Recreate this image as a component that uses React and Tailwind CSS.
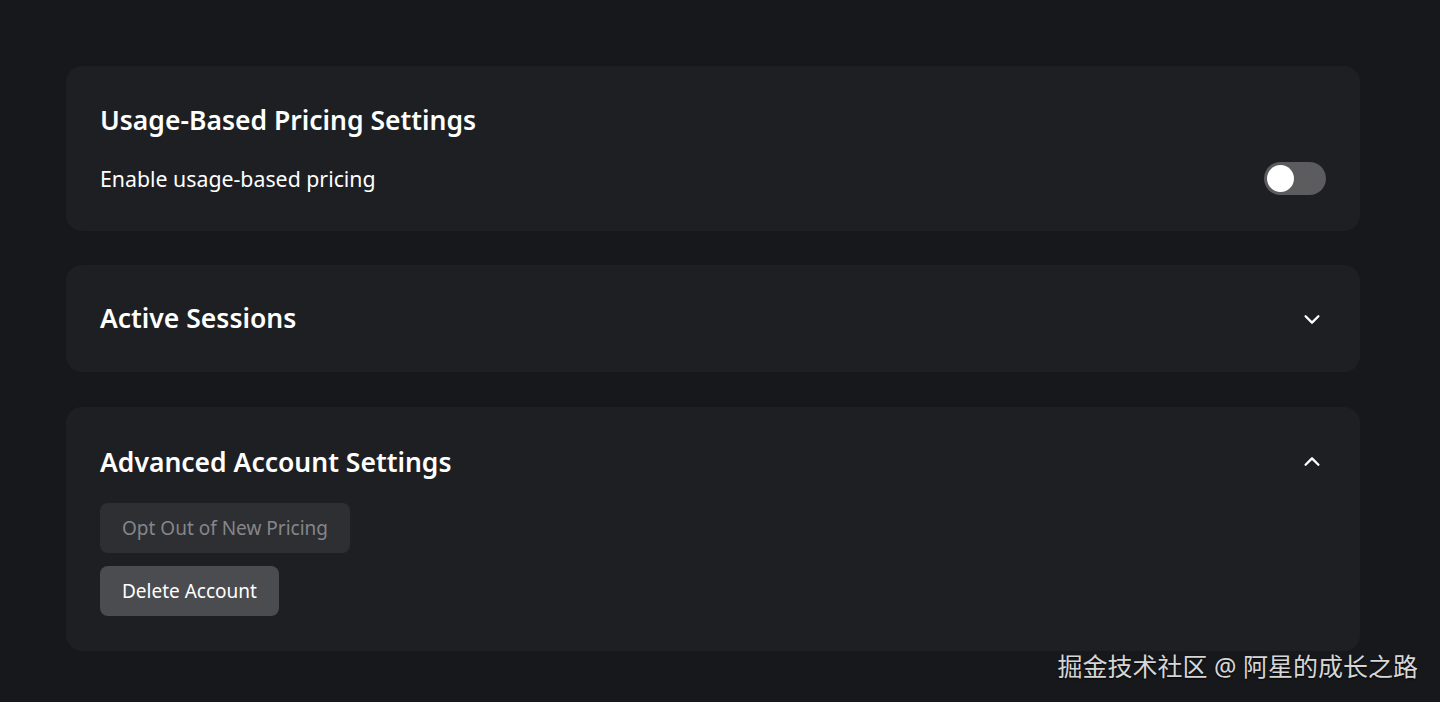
import React, { useState } from "react";

const Chevron = ({ up }) => (
  <svg width="22" height="22" viewBox="0 0 24 24" fill="none" stroke="white" strokeWidth="2.5" strokeLinecap="round" strokeLinejoin="round">
    {up ? <path d="M5 15l7-7 7 7" /> : <path d="M5 9l7 7 7-7" />}
  </svg>
);

const Card = ({ children, className = "" }) => (
  <div className={`bg-[#1e1f23] rounded-2xl px-[34px] ${className}`}>{children}</div>
);

export default function App() {
  const [enabled, setEnabled] = useState(false);

  return (
    <div
      className="relative min-h-[702px] bg-[#17181b] pt-[66px] pl-[66px] pr-[80px] pb-[51px] text-white"
      style={{ fontFamily: '"Noto Sans", "Noto Sans CJK SC", sans-serif' }}
    >
      <div className="flex flex-col gap-[34px]">
        {/* Usage-based pricing */}
        <Card className="pt-[36px] pb-[36px]">
          <h2 className="text-[26.5px] leading-[36px] font-semibold">Usage-Based Pricing Settings</h2>
          <div className="flex items-center justify-between mt-[24px] h-[33px]">
            <span className="text-[21.3px]">Enable usage-based pricing</span>
            <button
              type="button"
              onClick={() => setEnabled(!enabled)}
              className={`w-[62px] h-[33px] rounded-full flex items-center px-[3px] ${enabled ? "bg-[#3b82f6] justify-end" : "bg-[#5c5c5e]"}`}
            >
              <span className="w-[27px] h-[27px] rounded-full bg-white" />
            </button>
          </div>
        </Card>

        {/* Active sessions */}
        <Card className="py-[36px] flex items-center justify-between">
          <h2 className="text-[26.5px] leading-[35px] font-semibold">Active Sessions</h2>
          <span className="mr-[3px]">
            <Chevron />
          </span>
        </Card>

        {/* Advanced */}
        <Card className="mt-[1px] pt-[37px] pb-[35px]">
          <div className="flex items-center justify-between">
            <h2 className="text-[26.5px] leading-[36px] font-semibold">Advanced Account Settings</h2>
            <span className="mr-[3px]">
              <Chevron up />
            </span>
          </div>
          <div className="flex flex-col items-start gap-[13px] mt-[23px]">
            <button type="button" className="h-[50px] px-[22px] rounded-lg bg-[#2e2f33] text-[#85868a] text-[19px]">
              Opt Out of New Pricing
            </button>
            <button type="button" className="h-[50px] px-[22px] rounded-lg bg-[#4b4c50] text-white text-[19px]">
              Delete Account
            </button>
          </div>
        </Card>
      </div>

      <div className="absolute right-[22px] bottom-[17px] text-[25px] text-[#d6d6d6] [text-shadow:0_1px_2px_rgba(0,0,0,0.8)]">
        掘金技术社区 @ 阿星的成长之路
      </div>
    </div>
  );
}
